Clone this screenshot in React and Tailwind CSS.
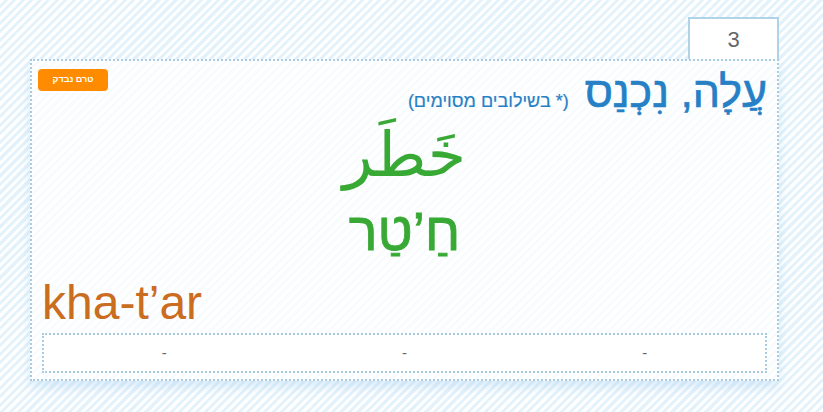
export default function App() {
  return (
    <div className="w-full h-[412px] overflow-hidden bg-[repeating-linear-gradient(135deg,#ffffff_0px,#ffffff_3px,#e4f2fb_3px,#e4f2fb_6px)] pt-[17px] pl-[30px]">
      <div className="w-[749px]">
        {/* number tab */}
        <div className="flex justify-end">
          <div className="w-[91px] h-[42px] border-2 border-b-0 border-[#b0d3ea] bg-white flex items-center justify-center text-[22px] text-[#666] font-['Liberation_Sans',sans-serif]">
            3
          </div>
        </div>

        {/* card */}
        <div className="h-[322px] border-2 border-dotted border-[#a8cbe2] bg-white/75 shadow-[0_6px_10px_rgba(170,210,240,0.45)] px-[10px] pt-[8px] flex flex-col">
          <div className="flex justify-between items-start">
            <button className="-ml-[4px] w-[70px] h-[22px] rounded-[4px] bg-[#ff8c00] text-white text-[9px] font-bold font-['Liberation_Sans',sans-serif]" dir="rtl">
              טרם נבדק
            </button>
            <div dir="rtl" className="flex items-baseline gap-[16px] mt-[1px] text-[#2680c6] font-['Liberation_Sans',sans-serif]">
              <span className="text-[43px] leading-[44px] [-webkit-text-stroke:0.7px_#2680c6]">עֲלָה, נִכְנַס</span>
              <span className="text-[18px] [-webkit-text-stroke:0.2px_#2680c6]">(* בשילובים מסוימים)</span>
            </div>
          </div>

          <div dir="rtl" className="text-center text-[#38a935] text-[62px] leading-[72px] mt-[4px] font-['DejaVu_Sans',sans-serif]">
            خَطَر
          </div>
          <div dir="rtl" className="text-center text-[#38a935] text-[54px] leading-[60px] mt-[10px] font-['Liberation_Sans',sans-serif] [-webkit-text-stroke:0.8px_#38a935]">
            חַ’טַר
          </div>

          <div className="text-[#cb6d1f] text-[48px] leading-[52px] mt-[16px] font-['Liberation_Sans',sans-serif]">
            kha-t’ar
          </div>

          <div className="mt-[4px] h-[40px] border-2 border-dotted border-[#a8cbe2] bg-white grid grid-cols-3 items-center text-center text-[#666] text-[15px] font-['Liberation_Sans',sans-serif]">
            <span>-</span>
            <span>-</span>
            <span>-</span>
          </div>
        </div>
      </div>
    </div>
  );
}
